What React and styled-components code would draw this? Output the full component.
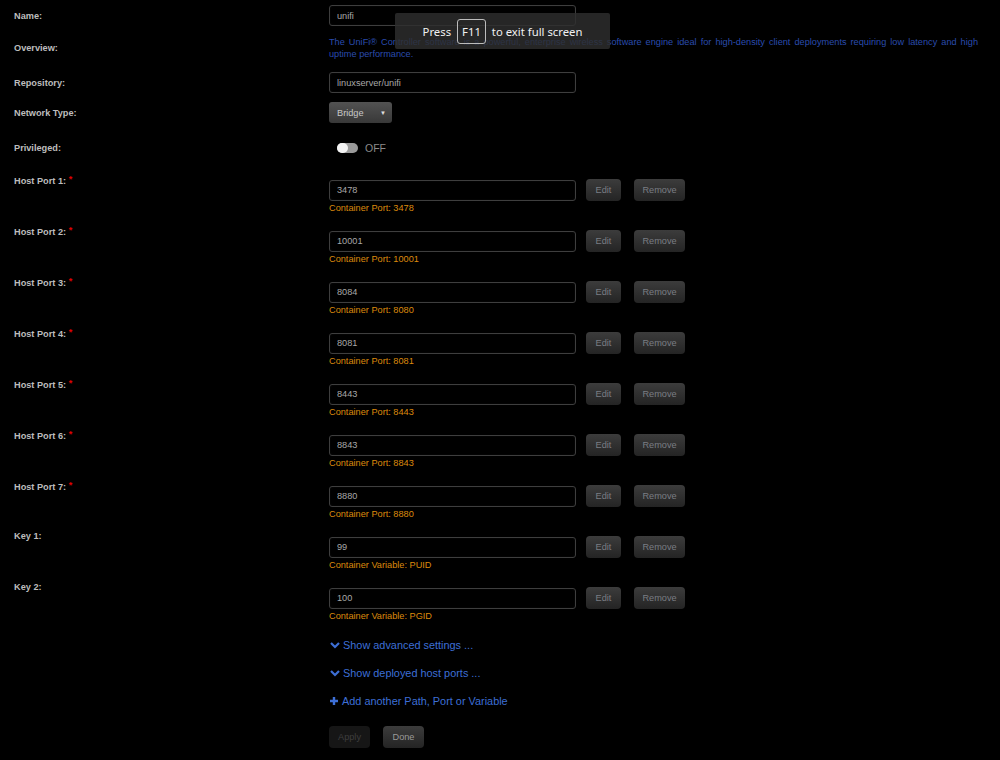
import React from 'react';
import styled, { createGlobalStyle } from 'styled-components';

const GlobalStyle = createGlobalStyle`
	html, body {
		margin: 0;
		background: #000;
	}
	body {
		font-family: 'Liberation Sans', Arial, sans-serif;
	}
`;

const ports = [
	{ host: '3478', container: '3478' },
	{ host: '10001', container: '10001' },
	{ host: '8084', container: '8080' },
	{ host: '8081', container: '8081' },
	{ host: '8443', container: '8443' },
	{ host: '8843', container: '8843' },
	{ host: '8880', container: '8880' },
];

const keys = [
	{ value: '99', variable: 'PUID' },
	{ value: '100', variable: 'PGID' },
];

const Chevron = () => (
	<svg width="10" height="8" viewBox="0 0 10 8">
		<path d="M1 2 L5 6 L9 2" stroke="#3d6fd6" strokeWidth="2.2" fill="none" />
	</svg>
);

const Plus = () => (
	<svg width="8" height="8" viewBox="0 0 8 8">
		<path d="M4 0 V8 M0 4 H8" stroke="#3d6fd6" strokeWidth="2.4" />
	</svg>
);

const App = () => {
	return (
		<>
			<GlobalStyle />
			<Page>
				<Row $mt={0}>
					<Label>Name:</Label>
					<Input defaultValue="unifi" />
				</Row>
				<Row $mt={10}>
					<Label>Overview:</Label>
					<Overview>
						The UniFi® Controller software is a powerful, enterprise wireless software engine ideal
						for high-density client deployments requiring low latency and high uptime performance.
					</Overview>
				</Row>
				<Row $mt={12}>
					<Label>Repository:</Label>
					<Input defaultValue="linuxserver/unifi" />
				</Row>
				<Row $mt={9}>
					<Label>Network Type:</Label>
					<Select>
						<span>Bridge</span>
						<Arrow>▼</Arrow>
					</Select>
				</Row>
				<Row $mt={14}>
					<Label>Privileged:</Label>
					<ToggleWrap>
						<Toggle>
							<Knob />
						</Toggle>
						<ToggleText>OFF</ToggleText>
					</ToggleWrap>
				</Row>

				<PortList>
					{ports.map((p, i) => (
						<PortRow key={i}>
							<Label $top>
								Host Port {i + 1}: <Req>*</Req>
							</Label>
							<div>
								<FieldLine>
									<Input defaultValue={p.host} />
									<Button>Edit</Button>
									<Button $wide>Remove</Button>
								</FieldLine>
								<Help>Container Port: {p.container}</Help>
							</div>
						</PortRow>
					))}
					{keys.map((k, i) => (
						<PortRow key={'k' + i}>
							<Label $top>Key {i + 1}:</Label>
							<div>
								<FieldLine>
									<Input defaultValue={k.value} />
									<Button>Edit</Button>
									<Button $wide>Remove</Button>
								</FieldLine>
								<Help>Container Variable: {k.variable}</Help>
							</div>
						</PortRow>
					))}
				</PortList>

				<Row $mt={0}>
					<div />
					<Links>
						<LinkItem>
							<Chevron /> Show advanced settings ...
						</LinkItem>
						<LinkItem>
							<Chevron /> Show deployed host ports ...
						</LinkItem>
						<LinkItem $plus>
							<Plus /> Add another Path, Port or Variable
						</LinkItem>
					</Links>
				</Row>

				<Row $mt={18}>
					<div />
					<Actions>
						<ActionButton disabled>Apply</ActionButton>
						<ActionButton>Done</ActionButton>
					</Actions>
				</Row>
			</Page>

			<Overlay>
				Press <KeyCap>F11</KeyCap> to exit full screen
			</Overlay>
		</>
	);
};

export default App;

const Page = styled.div`
	padding: 5px 22px 0 14px;
`;

const Row = styled.div`
	display: grid;
	grid-template-columns: 315px 1fr;
	align-items: center;
	margin-top: ${(p) => p.$mt}px;
`;

const Label = styled.div`
	font-size: 9.2px;
	font-weight: bold;
	color: #bdbdbd;
	line-height: 12px;
	align-self: ${(p) => (p.$top ? 'start' : 'center')};
	margin-top: ${(p) => (p.$top ? '-6px' : '0')};
`;

const Req = styled.span`
	color: #e00000;
	font-size: 9px;
	vertical-align: 2px;
`;

const Input = styled.input`
	box-sizing: border-box;
	width: 247px;
	height: 21px;
	padding: 0 7px;
	background: #000;
	border: 1px solid #3e3e3e;
	border-radius: 3px;
	box-shadow: inset 0 0 2px rgba(255, 255, 255, 0.06);
	color: #a8a8a8;
	font-family: 'Liberation Sans', Arial, sans-serif;
	font-size: 9.2px;
	outline: none;
`;

const Overview = styled.div`
	font-size: 9.2px;
	line-height: 12px;
	color: #2a4cae;
	text-align: justify;
`;

const Select = styled.div`
	box-sizing: border-box;
	width: 63px;
	height: 21px;
	padding: 0 6px 0 8px;
	display: flex;
	align-items: center;
	justify-content: space-between;
	border-radius: 3px;
	background: linear-gradient(#525252, #383838);
	color: #c8c8c8;
	font-size: 9.2px;
`;

const Arrow = styled.span`
	font-size: 6px;
	color: #e0e0e0;
`;

const ToggleWrap = styled.div`
	display: flex;
	align-items: center;
	gap: 7px;
	height: 20px;
	padding-left: 8px;
	padding-top: 1px;
`;

const Toggle = styled.div`
	width: 21px;
	height: 10px;
	border-radius: 5px;
	background: #9a9a9a;
	display: flex;
	align-items: center;
`;

const Knob = styled.div`
	width: 11px;
	height: 10px;
	border-radius: 5px;
	background: #f4f4f4;
`;

const ToggleText = styled.span`
	font-size: 10.5px;
	color: #8a8a8a;
`;

const PortList = styled.div`
	margin-top: 21px;
`;

const PortRow = styled.div`
	display: grid;
	grid-template-columns: 315px 1fr;
	height: 35px;
	margin-bottom: 16px;
`;

const FieldLine = styled.div`
	display: flex;
	align-items: center;
`;

const Button = styled.div`
	box-sizing: border-box;
	height: 22px;
	width: ${(p) => (p.$wide ? '51px' : '35px')};
	margin-left: ${(p) => (p.$wide ? '13px' : '10px')};
	display: flex;
	align-items: center;
	justify-content: center;
	border-radius: 4px;
	background: linear-gradient(#3c3c3c, #242424);
	box-shadow: 0 1px 1px rgba(0, 0, 0, 0.6);
	color: #7a7d84;
	font-size: 9.2px;
`;

const Help = styled.div`
	margin-top: 1px;
	font-size: 9.2px;
	line-height: 12px;
	color: #dc8a0c;
`;

const Links = styled.div`
	display: flex;
	flex-direction: column;
	gap: 14px;
`;

const LinkItem = styled.div`
	display: flex;
	align-items: center;
	gap: ${(p) => (p.$plus ? '4px' : '3px')};
	height: 14px;
	padding-left: 1px;
	font-size: 10.9px;
	color: #3d6fd6;
`;

const Actions = styled.div`
	display: flex;
	gap: 13px;
`;

const ActionButton = styled.div`
	box-sizing: border-box;
	width: 41px;
	height: 22px;
	display: flex;
	align-items: center;
	justify-content: center;
	border-radius: 4px;
	font-size: 9.2px;
	background: ${(p) => (p.disabled ? '#161616' : 'linear-gradient(#3c3c3c, #242424)')};
	color: ${(p) => (p.disabled ? '#3e3e3e' : '#9a9a9a')};
`;

const Overlay = styled.div`
	position: absolute;
	left: 395px;
	top: 13px;
	width: 215px;
	height: 36px;
	display: flex;
	align-items: center;
	justify-content: center;
	gap: 6px;
	background: rgba(46, 46, 46, 0.82);
	border-radius: 2px;
	color: #f0f0f0;
	font-family: 'Noto Sans', sans-serif;
	font-size: 11.3px;
`;

const KeyCap = styled.span`
	display: inline-flex;
	align-items: center;
	justify-content: center;
	box-sizing: border-box;
	height: 25px;
	padding: 0 4px;
	border: 1px solid #bcbcbc;
	border-radius: 3px;
`;
